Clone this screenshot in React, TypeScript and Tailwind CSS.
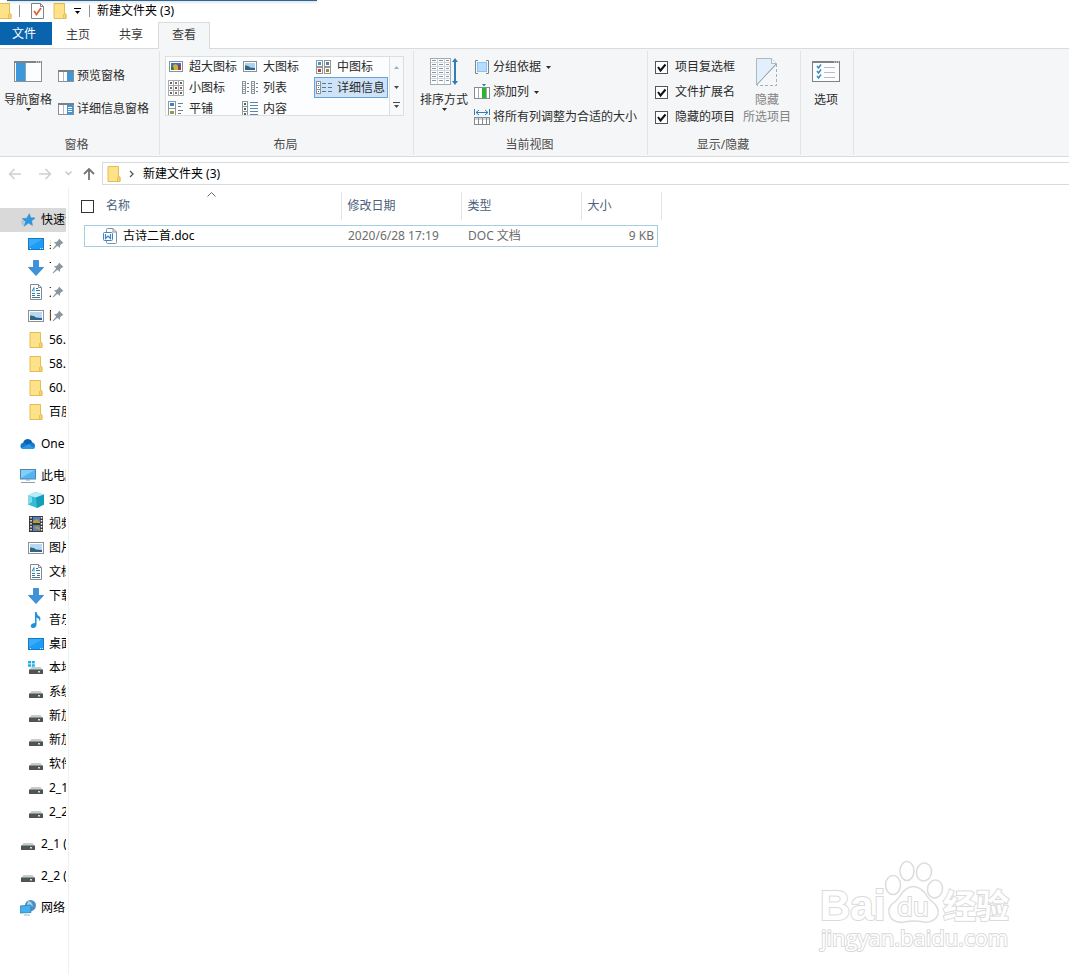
import type { ReactNode } from "react";

/* ---------- small icons ---------- */

function Folder({ small = false }: { small?: boolean }) {
  return (
    <svg width={small ? 14 : 16} height="16" viewBox="0 0 14 16" className="shrink-0">
      <path d="M1 .5h10.500v10l1.500.7v4.300H1z" fill="#fde28a" stroke="#e3bd55" />
      <path d="M11.500 10.500l-1 1v4h2.500v-4.300z" fill="#f6d36b" stroke="#e0b84c" strokeWidth=".7" />
    </svg>
  );
}

function Caret({ className = "" }: { className?: string }) {
  return (
    <svg width="5" height="3" viewBox="0 0 5 3" className={"shrink-0 " + className}>
      <path d="M0 0h5L2.500 3z" fill="currentColor" />
    </svg>
  );
}

function Picture({ vivid = false }: { vivid?: boolean }) {
  return (
    <svg width="16" height="16" viewBox="0 0 16 16" className="shrink-0">
      <rect x="1.500" y="2.500" width="13" height="10" fill="#fff" stroke="#8a9096" />
      <rect x="3" y="4" width="10" height="7" fill={vivid ? "#3f6fc4" : "#a9d3f2"} />
      {vivid ? (
        <>
          <path d="M3 8h4l2 3H3z" fill="#3d7a36" />
          <path d="M5 6l3-1 3 3-1 3H6z" fill="#c7b43b" />
          <path d="M10 6h3v5h-3z" fill="#8b4256" />
        </>
      ) : (
        <>
          <path d="M3 8q3-1 5 .5l5 .5v2H3z" fill="#31618d" />
          <path d="M3 6.500q3-.5 5 2l-5 .5z" fill="#3d6a63" />
        </>
      )}
    </svg>
  );
}

function WidePicture() {
  return (
    <svg width="16" height="16" viewBox="0 0 16 16" className="shrink-0">
      <rect x=".5" y="2.500" width="15" height="11" fill="#fff" stroke="#8a9096" />
      <rect x="2" y="4" width="12" height="8" fill="#b5d9f4" />
      <path d="M2 9q3-1.500 6 .5l6 .5v2H2z" fill="#31618d" />
      <path d="M2 7.500q3-.5 6 2l-6 .5z" fill="#3d6a63" />
    </svg>
  );
}

function PreviewPane() {
  return (
    <svg width="16" height="14" viewBox="0 0 16 14" className="shrink-0">
      <rect x=".5" y="1.500" width="15" height="11" fill="#fff" stroke="#8b9095" />
      <path d="M0 2h16" stroke="#7b8085" strokeWidth="2" />
      <path d="M5.500 3v9" stroke="#b5babd" />
      <rect x="9" y="3" width="6" height="9" fill="#3c97dc" />
    </svg>
  );
}

function DetailsPane() {
  return (
    <svg width="16" height="14" viewBox="0 0 16 14" className="shrink-0">
      <rect x=".5" y="1.500" width="15" height="11" fill="#fff" stroke="#8b9095" />
      <path d="M0 2h16" stroke="#7b8085" strokeWidth="2" />
      <path d="M5.500 3v9" stroke="#b5babd" />
      <rect x="9" y="3" width="6" height="9" fill="#3c97dc" />
      <path d="M10 5.500h4M10 7.500h4M10 9.500h4" stroke="#fff" />
    </svg>
  );
}

function NavigationPane() {
  return (
    <svg width="28" height="21" viewBox="0 0 28 21" className="shrink-0">
      <rect x=".5" y=".5" width="27" height="20" fill="#fbfdfe" stroke="#8b9095" />
      <path d="M0 1h28" stroke="#7d8387" strokeWidth="2" />
      <path d="M22 1h1M24 1h1M26 1h1" stroke="#fff" />
      <rect x="2" y="2" width="9" height="18" fill="#3c97dc" />
      <path d="M11.500 2v18" stroke="#9ba2a7" />
    </svg>
  );
}

function MediumIcons() {
  const tiles = [
    [1, 1, "#3c97dc"],
    [9, 1, "#5b7f9c"],
    [1, 8, "#c23b2e"],
    [9, 8, "#a58638"],
  ] as const;
  return (
    <svg width="16" height="16" viewBox="0 0 16 16" className="shrink-0">
      {tiles.map(([x, y, fill]) => (
        <g key={`${x}-${y}`}>
          <rect x={x - 0.5} y={y + 0.5} width="6" height="6" fill="#fff" stroke="#90969a" />
          <rect x={x + 1} y={y + 2} width="3" height="3" fill={fill} />
        </g>
      ))}
    </svg>
  );
}

function SmallIcons() {
  return (
    <svg width="16" height="16" viewBox="0 0 16 16" className="shrink-0">
      {[0, 5, 10].map((y) =>
        [0, 5, 10].map((x) => (
          <g key={`${x}-${y}`}>
            <rect x={x + 0.5} y={y + 0.5} width="5" height="5" fill="#fff" stroke="#a6abae" />
            <rect x={x + 2} y={y + 2} width="2" height="2" fill={(x + y) % 2 ? "#9a6453" : "#5f676d"} />
          </g>
        )),
      )}
    </svg>
  );
}

function ListIcon() {
  return (
    <svg width="16" height="16" viewBox="0 0 16 16" className="shrink-0">
      {[0, 9].map((x) =>
        [1, 5, 9].map((y) => (
          <g key={`${x}-${y}`}>
            <rect x={x + 0.5} y={y + 0.5} width="3" height="4" fill="#fff" stroke="#8d9296" />
            <path d={`M${x + 1.5} ${y + 2.5}h1`} stroke="#4d779c" />
            <path d={`M${x + 5} ${y + 2.5}h2`} stroke="#777c80" />
          </g>
        )),
      )}
    </svg>
  );
}

function DetailsIcon() {
  return (
    <svg width="16" height="14" viewBox="0 0 16 14" className="shrink-0">
      {[0, 4, 8].map((y) => (
        <g key={y}>
          <rect x=".5" y={y + 0.5} width="4" height="4" fill="#fff" stroke="#8d9296" />
          <path d={`M2 ${y + 2.5}h1`} stroke="#3f6f99" />
          <path d={`M6 ${y + 2.5}h4M12 ${y + 2.5}h4`} stroke="#557a9e" />
        </g>
      ))}
    </svg>
  );
}

function TilesIcon() {
  return (
    <svg width="16" height="16" viewBox="0 0 16 16" className="shrink-0">
      <rect x=".5" y=".5" width="7" height="7" fill="#fff" stroke="#90969a" />
      <rect x=".5" y="7.500" width="7" height="7" fill="#fff" stroke="#90969a" />
      <rect x="2" y="2" width="4" height="3" fill="#3985c4" />
      <rect x="2" y="10" width="4" height="3" fill="#8b9a4b" />
      <path d="M10 2.500h5M10 5.500h3M10 9.500h5M10 12.500h3" stroke="#777d82" />
    </svg>
  );
}

function ContentIcon() {
  return (
    <svg width="16" height="16" viewBox="0 0 16 16" className="shrink-0">
      {[0, 5, 10].map((y) => (
        <g key={y}>
          <rect x=".5" y={y + 0.5} width="5" height="5" fill="#fff" stroke="#90969a" />
          <rect x="2" y={y + 2} width="2" height="2" fill="#3f6b54" />
        </g>
      ))}
      <path d="M8 1.500h8M8 4.500h8M8 7.500h8M8 10.500h8M8 13.500h8" stroke="#5b87ab" />
    </svg>
  );
}

function SortIcon() {
  return (
    <svg width="28" height="28" viewBox="0 0 28 28" className="shrink-0">
      <rect x=".5" y=".5" width="20" height="26" fill="#fff" stroke="#a4abb0" />
      <path d="M1 4.500h19M1 8.500h19M1 12.500h19M1 16.500h19M1 20.500h19M7.500 1v25M14.500 1v25" stroke="#cfd6db" />
      <path
        d="M2 2.500h4M9 2.500h4M16 2.500h3M2 6.500h4M9 6.500h4M16 6.500h3M2 10.500h4M9 10.500h4M16 10.500h3M2 14.500h4M9 14.500h4M16 14.500h3M2 18.500h4M9 18.500h4M16 18.500h3M2 22.500h4M9 22.500h4M16 22.500h3"
        stroke="#8297a8"
      />
      <path d="M25 3v22" stroke="#2f7eb6" strokeWidth="2" />
      <path d="M22 4l3-4 3 4zM22 23l3 4 3-4z" fill="#2f7eb6" />
    </svg>
  );
}

function GroupByIcon() {
  return (
    <svg width="16" height="16" viewBox="0 0 16 16" className="shrink-0">
      <path d="M4 1.500H1.500v13H4M12 1.500h2.500v13H12" fill="none" stroke="#7c858c" />
      <rect x="3.500" y="3.500" width="9" height="9" fill="#b4ddff" stroke="#8cc5f3" />
    </svg>
  );
}

function AddColumnIcon() {
  return (
    <svg width="16" height="16" viewBox="0 0 16 16" className="shrink-0">
      <rect x=".5" y="3.500" width="15" height="11" fill="#fff" stroke="#858c91" />
      <path d="M4.500 4v10M12.500 4v10" stroke="#a4aaae" />
      <rect x="8" y="4" width="4" height="10" fill="#2bb52b" />
      <path d="M8 0h4l-2 2.500z" fill="#2d78b5" />
    </svg>
  );
}

function FitColumnsIcon() {
  return (
    <svg width="16" height="16" viewBox="0 0 16 16" className="shrink-0">
      <path d="M.5 0v6M15.500 0v6M2 3.500h12" stroke="#2f7eb6" />
      <path d="M5 1L2 3.500 5 6M11 1l3 2.500L11 6" fill="none" stroke="#2f7eb6" />
      <rect x=".5" y="8.500" width="15" height="7" fill="#fff" stroke="#858c91" />
      <path d="M1 10h14" stroke="#aeb4b8" />
      <path d="M4.500 9v7M8.500 9v7M12.500 9v7" stroke="#858c91" />
    </svg>
  );
}

function HideIcon() {
  return (
    <svg width="22" height="28" viewBox="0 0 22 28" className="shrink-0">
      <path d="M.5.5h15l5 5L.5 27z" fill="#e3effa" stroke="#a9bac7" />
      <path d="M15.500.5v5h5" fill="#f5f9fc" stroke="#a9bac7" />
      <path d="M20.500 6v21.500H1" fill="none" stroke="#9fb0bd" strokeDasharray="3 2" />
      <path d="M20.500 6L.5 27" stroke="#8fa3b1" />
    </svg>
  );
}

function OptionsIcon() {
  return (
    <svg width="28" height="21" viewBox="0 0 28 21" className="shrink-0">
      <rect x=".5" y=".5" width="27" height="20" fill="#fbfdfe" stroke="#7d8387" />
      <path d="M0 1h28" stroke="#7d8387" strokeWidth="2" />
      <path d="M22 1h1M24 1h1M26 1h1" stroke="#fff" />
      <path d="M12 6.500h11M12 11.500h11M12 16.500h11" stroke="#b5bdc3" />
      <path d="M5 5l1.500 2L9 3.500M5 10l1.500 2L9 8.500M5 15l1.500 2L9 13.500" fill="none" stroke="#3c88c2" strokeWidth="1.500" />
    </svg>
  );
}

function Star() {
  return (
    <svg width="16" height="16" viewBox="-1.500 -1 18 18" className="shrink-0">
      <path
        d="M9 1l1.500 4.500 5 .2-4 3.300 1 5-4.500-2.500L3 15l2-5L1 6.500l5.200-.6z"
        fill="#2f97e0"
        stroke="#2682c6"
        strokeWidth=".6"
      />
      <path d="M0 11.500h4M0 9.500h3M1 13.500h3" stroke="#6cb5e8" strokeWidth=".8" />
    </svg>
  );
}

function Desktop() {
  return (
    <svg width="16" height="16" viewBox="0 0 16 16" className="shrink-0">
      <rect x=".5" y="2.500" width="15" height="11" fill="#1e9bf5" stroke="#1479c6" />
      <path d="M1 3h14L1 11z" fill="#3babf8" />
      <path d="M2 12.500h1M12 12.500h1M14 12.500h1" stroke="#d5ecfd" />
    </svg>
  );
}

function Download() {
  return (
    <svg width="16" height="16" viewBox="0 0 16 16" className="shrink-0">
      <path d="M5.500.5h5v7h5L8 15.500.5 7.500h5z" fill="#3d93db" stroke="#3181c6" strokeWidth=".8" />
    </svg>
  );
}

function Document() {
  return (
    <svg width="16" height="16" viewBox="0 0 16 16" className="shrink-0">
      <path d="M2.500.5h8l3 3v12h-11z" fill="#fff" stroke="#858b90" />
      <path d="M10.500.5v3h3" fill="none" stroke="#858b90" />
      <path d="M8 4.500h2M8 6.500h4M4 9.500h3M9 9.500h3M4 11.500h3M9 11.500h3M4 13.500h8" stroke="#3a7a96" />
      <path d="M4 7.500L6 3.500v4" fill="none" stroke="#2f8fd0" />
    </svg>
  );
}

function Cloud() {
  return (
    <svg width="16" height="16" viewBox="0 0 16 16" className="shrink-0">
      <path d="M3 13a3.200 3.200 0 01.3-6.300A4.600 4.600 0 0112 6.200 3.600 3.600 0 0113 13z" fill="#1479cc" />
      <path d="M3.300 6.700A4.600 4.600 0 0112 6.200L8 8.500z" fill="#0f61b4" />
      <path d="M1.500 12L9 8l5.500 4q-.6 1-2 1H3q-1 0-1.500-1z" fill="#2a9ae8" />
    </svg>
  );
}

function Computer() {
  return (
    <svg width="16" height="16" viewBox="0 0 16 16" className="shrink-0">
      <rect x=".5" y="1.500" width="15" height="9.500" fill="#52b4f0" stroke="#4d88ad" />
      <path d="M1 2h14L1 10z" fill="#83cdf7" />
      <path d="M6 12h4M1 14.500h14" stroke="#8aa0ad" />
    </svg>
  );
}

function Cube() {
  return (
    <svg width="16" height="16" viewBox="0 0 16 16" className="shrink-0">
      <path d="M0 3.500L7 0l9 2.500v10L9 16l-9-3.500z" fill="#35bcd4" />
      <path d="M0 3.500L7 0l9 2.500-8 3z" fill="#b8edf4" />
      <path d="M8 5.500l8-3v10L9 16z" fill="#159db9" />
      <path d="M0 3.500l4 1.500v5L0 12.500z" fill="#7edce8" />
    </svg>
  );
}

function Film() {
  return (
    <svg width="16" height="16" viewBox="0 0 16 16" className="shrink-0">
      <rect x="1" y="0" width="14" height="16" fill="#3b3b3f" />
      <rect x="5" y="1" width="7" height="6" fill="#527fc7" />
      <rect x="5" y="9" width="7" height="6" fill="#5582bf" />
      <path d="M5 5l4-2 3 3v1H5zM6 12l3-2 3 2v2z" fill="#b59c35" />
      <path d="M3 1v14M13.500 1v14" stroke="#fff" strokeWidth="1.500" strokeDasharray="1.500 1.500" />
    </svg>
  );
}

function Music() {
  return (
    <svg width="16" height="16" viewBox="0 0 16 16" className="shrink-0">
      <path
        d="M7 0h1.500q.3 3 2.700 4.300 2.300 2 .3 5.200.3-3-3-4V13q-.5 3-3.500 3-2.500-.2-2.200-2.500Q3.500 11 7 11z"
        fill="#1e90dc"
      />
    </svg>
  );
}

function Drive({ system = false }: { system?: boolean }) {
  return (
    <svg width="16" height="16" viewBox="0 0 16 16" className="shrink-0">
      <path d="M3.500 7h9l2.500 3H1z" fill="#c9cbcc" />
      <rect x="1" y="9.500" width="14" height="4.500" rx=".5" fill="#4f5556" />
      <rect x="10" y="11" width="2" height="1.500" fill="#b9f3c5" />
      {system && <path d="M0 1h3v2.500H0zM3.800 1h3v2.500h-3zM0 4.200h3v2.500H0zM3.800 4.200h3v2.500h-3z" fill="#1fb0ea" />}
    </svg>
  );
}

function Network() {
  return (
    <svg width="16" height="16" viewBox="0 0 16 16" className="shrink-0">
      <circle cx="10.500" cy="5.500" r="5.500" fill="#4f8fc0" />
      <path d="M8 1l3 1 2 4-3 1-3-2z" fill="#a9d4ec" />
      <path d="M0 6l11-1v7.500L0 13z" fill="#45aff0" stroke="#2f7db0" strokeWidth=".8" />
      <path d="M4 15h6" stroke="#9db4c2" />
    </svg>
  );
}

function Pin() {
  return (
    <svg width="12" height="12" viewBox="0 0 12 12" className="shrink-0">
      <path d="M7 .5L11.500 5l-1.500.5-2 2V10L5.500 7.800 1 11.500l-.5-.5L4.200 6.500 2 4h2.500l2-2z" fill="#8b979f" />
    </svg>
  );
}

/* ---------- ribbon ---------- */

function Group({ label, className = "", children }: { label?: string; className?: string; children: ReactNode }) {
  return (
    <section className={"flex shrink-0 flex-col border-r border-[#e2e3e4] " + className}>
      <div className="flex h-21 items-start">{children}</div>
      <div className="h-5 pr-0.5 text-center leading-5 text-[#4c4c4c]">{label}</div>
    </section>
  );
}

function SmallButton({ icon, label, menu = false }: { icon: ReactNode; label: string; menu?: boolean }) {
  return (
    <button type="button" className="flex h-4 items-center gap-[3px] leading-4">
      {icon}
      {label}
      {menu && <Caret className="ml-0.5" />}
    </button>
  );
}

function Toggle({ label }: { label: string }) {
  return (
    <label className="flex h-4 items-center gap-[7px] leading-4">
      <span className="grid">
        <input
          type="checkbox"
          defaultChecked
          className="peer col-start-1 row-start-1 size-[13px] appearance-none border border-[#50565c] bg-white"
        />
        <svg
          width="13"
          height="13"
          viewBox="0 0 13 13"
          className="pointer-events-none invisible col-start-1 row-start-1 peer-checked:visible"
        >
          <path d="M3 6l2.500 3.500L10.500 3.500" fill="none" stroke="#111" strokeWidth="2" />
        </svg>
      </span>
      {label}
    </label>
  );
}

const layouts = [
  { label: "超大图标", icon: <Picture vivid /> },
  { label: "大图标", icon: <Picture /> },
  { label: "中图标", icon: <MediumIcons /> },
  { label: "小图标", icon: <SmallIcons /> },
  { label: "列表", icon: <ListIcon /> },
  { label: "详细信息", icon: <DetailsIcon />, active: true },
  { label: "平铺", icon: <TilesIcon /> },
  { label: "内容", icon: <ContentIcon /> },
];

function Ribbon() {
  return (
    <div className="flex border-y border-[#dadbdc] bg-[#f5f6f7] pt-0.5 pb-px whitespace-nowrap text-[#2b2b2b]">
      <Group label="窗格" className="w-40 pr-1">
        <button type="button" className="ml-1 flex flex-col items-center pt-2.5 leading-4">
          <NavigationPane />
          <span className="mt-2.5">导航窗格</span>
          <Caret />
        </button>
        <div className="ml-1.5 flex flex-col gap-[17px] pt-[17px]">
          <SmallButton icon={<PreviewPane />} label="预览窗格" />
          <SmallButton icon={<DetailsPane />} label="详细信息窗格" />
        </div>
      </Group>

      <Group label="布局" className="w-[254px]">
        <div className="mt-[5px] ml-[5px] flex h-[60px] overflow-hidden border border-[#dcdfe1] bg-[#fbfdfe]">
          <div className="-mt-px grid auto-rows-[21px] grid-cols-[74px_74px_74px]">
            {layouts.map((l) => (
              <button
                key={l.label}
                type="button"
                className={
                  "flex items-center gap-[5px] border pl-px leading-4 " +
                  (l.active ? "border-[#66a3d8] bg-[#cfe3f8]" : "border-transparent")
                }
              >
                {l.icon}
                {l.label}
              </button>
            ))}
          </div>
          <div className="ml-px flex w-3.5 flex-col border-l border-[#dcdfe1] bg-[#f7f9fa]">
            <button type="button" aria-label="向上滚动" className="flex h-5 items-center justify-center text-[#a9aeb2]">
              <Caret className="rotate-180" />
            </button>
            <button type="button" aria-label="向下滚动" className="flex h-5 items-center justify-center text-[#444b50]">
              <Caret />
            </button>
            <button
              type="button"
              aria-label="更多布局"
              className="flex h-4 flex-col items-center justify-center gap-0.5 text-[#444b50]"
            >
              <span className="h-px w-[7px] bg-[#444b50]" />
              <Caret />
            </button>
          </div>
        </div>
      </Group>

      <Group label="当前视图" className="w-[234px]">
        <button type="button" className="ml-1.5 flex flex-col items-center pt-[7px] leading-4">
          <SortIcon />
          <span className="mt-1.5">排序方式</span>
          <Caret />
        </button>
        <div className="ml-1.5 flex flex-col items-start gap-[9px] pt-2">
          <SmallButton icon={<GroupByIcon />} label="分组依据" menu />
          <SmallButton icon={<AddColumnIcon />} label="添加列" menu />
          <SmallButton icon={<FitColumnsIcon />} label="将所有列调整为合适的大小" />
        </div>
      </Group>

      <Group label="显示/隐藏" className="w-[153px]">
        <div className="ml-[7px] flex flex-col gap-[9px] pt-2">
          <Toggle label="项目复选框" />
          <Toggle label="文件扩展名" />
          <Toggle label="隐藏的项目" />
        </div>
        <button type="button" className="ml-2 flex flex-col items-center pt-[7px] leading-[17px] text-[#838383]">
          <HideIcon />
          <span className="mt-[5px]">隐藏</span>
          <span>所选项目</span>
        </button>
      </Group>

      <Group className="w-[53px] items-center pr-0.5">
        <button type="button" className="flex flex-col items-center pt-2.5 leading-4">
          <OptionsIcon />
          <span className="mt-2.5">选项</span>
        </button>
      </Group>
    </div>
  );
}

/* ---------- navigation tree ---------- */

type Item = { label: string; icon: ReactNode; pinned?: boolean };
type Branch = { label: string; icon: ReactNode; selected?: boolean; children?: Item[] };

const tree: Branch[] = [
  {
    label: "快速访问",
    icon: <Star />,
    selected: true,
    children: [
      { label: "桌面", icon: <Desktop />, pinned: true },
      { label: "下载", icon: <Download />, pinned: true },
      { label: "文档", icon: <Document />, pinned: true },
      { label: "图片", icon: <WidePicture />, pinned: true },
      { label: "56.", icon: <Folder /> },
      { label: "58.", icon: <Folder /> },
      { label: "60.", icon: <Folder /> },
      { label: "百度", icon: <Folder /> },
    ],
  },
  { label: "One", icon: <Cloud /> },
  {
    label: "此电脑",
    icon: <Computer />,
    children: [
      { label: "3D", icon: <Cube /> },
      { label: "视频", icon: <Film /> },
      { label: "图片", icon: <WidePicture /> },
      { label: "文档", icon: <Document /> },
      { label: "下载", icon: <Download /> },
      { label: "音乐", icon: <Music /> },
      { label: "桌面", icon: <Desktop /> },
      { label: "本地", icon: <Drive system /> },
      { label: "系统", icon: <Drive /> },
      { label: "新加", icon: <Drive /> },
      { label: "新加", icon: <Drive /> },
      { label: "软件", icon: <Drive /> },
      { label: "2_1", icon: <Drive /> },
      { label: "2_2", icon: <Drive /> },
    ],
  },
  { label: "2_1 (", icon: <Drive /> },
  { label: "2_2 (", icon: <Drive /> },
  { label: "网络", icon: <Network /> },
];

function Sidebar() {
  return (
    <aside className="shrink-0 border-r border-[#f0f1f2] pt-[21px] pr-0.5 pb-14">
      <ul className="flex w-[66px] flex-col gap-2 overflow-hidden whitespace-nowrap text-black">
        {tree.map((b) => (
          <li key={b.label}>
            <a
              href="#"
              className={"flex h-6 items-center gap-[5px] pl-5 leading-4 " + (b.selected ? "bg-[#d9d9d9]" : "")}
            >
              {b.icon}
              {b.label}
            </a>
            {b.children && (
              <ul>
                {b.children.map((c, i) => (
                  <li key={i}>
                    <a href="#" className="flex h-6 items-center gap-[5px] pl-7 leading-4">
                      {c.icon}
                      {c.pinned ? (
                        <span className="-mr-1 w-0.5 shrink-0 overflow-hidden">{c.label}</span>
                      ) : (
                        <span>{c.label}</span>
                      )}
                      {c.pinned && <Pin />}
                    </a>
                  </li>
                ))}
              </ul>
            )}
          </li>
        ))}
      </ul>
    </aside>
  );
}

/* ---------- file list ---------- */

function WordFile() {
  return (
    <svg width="14" height="16" viewBox="0 0 14 16" className="shrink-0">
      <path d="M3.500 4V1.500q0-1 1-1H10l3.500 3.500v10.500q0 1-1 1h-8q-1 0-1-1V13" fill="#fff" stroke="#8a9299" />
      <path d="M10 .5V4h3.500" fill="none" stroke="#8a9299" />
      <rect x=".5" y="4.500" width="9" height="8" rx="1" fill="#fff" stroke="#3e84cc" />
      <path d="M2.500 6v4.500L5 8l2.500 2.500V6" fill="none" stroke="#3e84cc" strokeWidth="1.200" />
    </svg>
  );
}

function FileList() {
  const head = "h-7 border-r border-[#e3e6e8] p-0 pl-1.5 text-left font-normal";
  const cell = "flex h-[22px] items-center border-y border-[#a5cfe0] leading-4";
  return (
    <table className="mt-[5px] ml-3 w-[580px] table-fixed border-collapse whitespace-nowrap">
      <colgroup>
        <col className="w-[19px]" />
        <col className="w-[241px]" />
        <col className="w-[120px]" />
        <col className="w-[120px]" />
        <col className="w-20" />
      </colgroup>
      <thead className="text-[#4c607a]">
        <tr>
          <th className="p-0">
            <input
              type="checkbox"
              aria-label="全选"
              className="block size-[13px] appearance-none border border-[#333] bg-white"
            />
          </th>
          <th className={head + " relative"}>
            名称
            <svg width="9" height="5" viewBox="0 0 9 5" className="absolute top-0 left-[107px]">
              <path d="M.5 4.500l4-4 4 4" fill="none" stroke="#6d6d6d" />
            </svg>
          </th>
          <th className={head}>修改日期</th>
          <th className={head}>类型</th>
          <th className={head}>大小</th>
        </tr>
      </thead>
      <tbody className="text-[#6d6d6d]">
        <tr>
          <td className="p-0 pt-[5px]">
            <div className={cell + " ml-[3px] border-l"} />
          </td>
          <td className="p-0 pt-[5px] text-black">
            <div className={cell + " gap-1.5 pl-[3px]"}>
              <WordFile />
              古诗二首.doc
            </div>
          </td>
          <td className="p-0 pt-[5px]">
            <div className={cell + " pl-[7px]"}>2020/6/28 17:19</div>
          </td>
          <td className="p-0 pt-[5px]">
            <div className={cell + " pl-[7px]"}>DOC 文档</div>
          </td>
          <td className="p-0 pt-[5px]">
            <div className={cell + " mr-[3px] justify-end border-r pr-[3px]"}>9 KB</div>
          </td>
        </tr>
      </tbody>
    </table>
  );
}

function Watermark() {
  return (
    <svg width="196" height="104" viewBox="0 0 196 104" className="pointer-events-none absolute right-14 bottom-5">
      <g fill="#fff" stroke="#dcdcdc" strokeWidth="1.500">
        <ellipse cx="76" cy="33" rx="7.500" ry="9.500" />
        <ellipse cx="90" cy="19" rx="7" ry="9.500" />
        <ellipse cx="107" cy="20" rx="7.500" ry="9" transform="rotate(12 107 20)" />
        <ellipse cx="118" cy="37" rx="7.500" ry="9" transform="rotate(12 118 37)" />
        <path d="M85 41q11-13 23 0 4 7 10 11 6 8 1 14-5 5-12 4-10-2-20 0-9 1-13-4-5-8 1-14 6-4 10-11z" />
      </g>
      <g fill="#fff" stroke="#dadada" strokeWidth="2" paintOrder="stroke" fontWeight="700">
        <text x="3" y="68" fontFamily="Liberation Sans, sans-serif" fontSize="42">Bai</text>
        <text x="80" y="64" fontFamily="Open Sans, sans-serif" fontSize="26" fontWeight="400">du</text>
        <text x="126" y="66" fontFamily="Noto Sans CJK SC, sans-serif" fontSize="33">经验</text>
        <text x="4" y="94" fontFamily="Open Sans, sans-serif" fontSize="22" fontWeight="400">jingyan.baidu.com</text>
      </g>
    </svg>
  );
}

export default function App() {
  const tab = "h-full px-3.5";
  return (
    <div className="relative flex min-h-screen flex-col overflow-hidden bg-white font-['Noto_Sans','Noto_Sans_CJK_SC',sans-serif] text-[12px] leading-4 text-black">
      <div className="absolute top-0 left-[7px] h-px w-[310px] bg-[#2468a2] shadow-[0_1px_3px_rgba(0,0,0,0.3)]" />

      <header className="flex h-[22px] items-center whitespace-nowrap">
        <div className="-ml-0.5"><Folder small /></div>
        <span className="ml-[7px] h-3 w-px bg-[#8f8f8f]" />
        <button type="button" aria-label="属性" className="ml-[11px]">
          <svg width="13" height="16" viewBox="0 0 13 16">
            <path d="M.5.5h9l3 3v12H.5z" fill="#fff" stroke="#7e858b" />
            <path d="M9.500.5v3h3" fill="none" stroke="#7e858b" />
            <path d="M3 8l2.500 3.500L10 5" fill="none" stroke="#e0603a" strokeWidth="1.800" />
          </svg>
        </button>
        <button type="button" aria-label="新建文件夹" className="ml-[9px]"><Folder small /></button>
        <button type="button" aria-label="自定义快速访问工具栏" className="ml-[7px] flex flex-col items-center gap-0.5">
          <span className="h-px w-[7px] bg-black" />
          <Caret />
        </button>
        <span className="ml-2 h-3 w-px bg-[#8f8f8f]" />
        <h1 className="ml-[7px]">新建文件夹 (3)</h1>
      </header>

      <nav className="flex h-[26px] items-start text-[#3b3b3b]">
        <button type="button" className="h-[23px] bg-[#0a64ad] pr-4 pl-3 text-white">文件</button>
        <div className="flex h-full gap-px">
          <button type="button" className={tab}>主页</button>
          <button type="button" className={tab}>共享</button>
          <button
            type="button"
            className="relative z-10 h-[27px] border border-b-0 border-[#dadbdc] bg-[#f5f6f7] px-[13px] pb-0.5"
          >
            查看
          </button>
        </div>
      </nav>

      <Ribbon />

      <div className="flex items-center pt-[5px] pb-0.5">
        <button type="button" aria-label="后退" className="ml-2">
          <svg width="14" height="12" viewBox="0 0 14 12">
            <path d="M13 6H2M6.500 1L1.500 6l5 5" fill="none" stroke="#cfcfcf" strokeWidth="1.500" />
          </svg>
        </button>
        <button type="button" aria-label="前进" className="ml-4">
          <svg width="14" height="12" viewBox="0 0 14 12">
            <path d="M1 6h11M7.500 1l5 5-5 5" fill="none" stroke="#cfcfcf" strokeWidth="1.500" />
          </svg>
        </button>
        <button type="button" aria-label="最近浏览的位置" className="ml-[13px]">
          <svg width="7" height="5" viewBox="0 0 7 5">
            <path d="M.5.5l3 3 3-3" fill="none" stroke="#c4c4c4" strokeWidth="1.300" />
          </svg>
        </button>
        <button type="button" aria-label="上移" className="ml-2.5">
          <svg width="14" height="14" viewBox="0 0 14 14">
            <path d="M7 13V2M2 7l5-5 5 5" fill="none" stroke="#757575" strokeWidth="1.800" />
          </svg>
        </button>
        <div className="ml-1.5 flex h-[23px] flex-1 items-center border border-r-0 border-[#d9dadb] pl-1">
          <Folder small />
          <svg width="5" height="8" viewBox="0 0 5 8" className="ml-2">
            <path d="M1 1l3 3-3 3" fill="none" stroke="#555" strokeWidth="1.300" />
          </svg>
          <a href="#" className="ml-[9px]">新建文件夹 (3)</a>
        </div>
      </div>

      <div className="flex flex-1">
        <Sidebar />
        <main className="min-w-0 flex-1">
          <FileList />
        </main>
      </div>
      <Watermark />
    </div>
  );
}
